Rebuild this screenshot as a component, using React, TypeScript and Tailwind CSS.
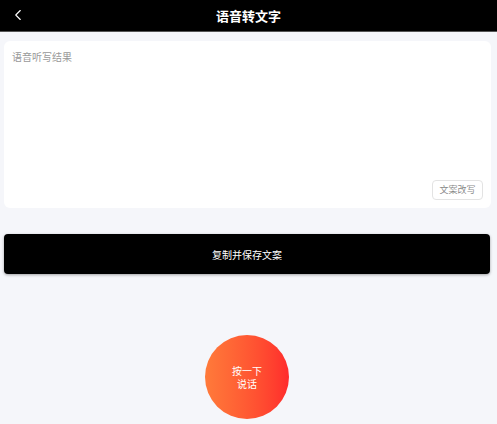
import { ChevronLeft } from 'lucide-react';

export default function App() {
  return (
    <div className="min-h-[424px] bg-[#f5f6fa] font-['Noto_Sans_CJK_SC','Noto_Sans',sans-serif]">
      <header className="relative flex h-8 items-center justify-center bg-black border-b border-[#555]">
        <button className="absolute left-[9px] top-[6px] text-white">
          <ChevronLeft className="h-[18px] w-[18px]" strokeWidth={1.5} />
        </button>
        <h1 className="text-[13px] font-bold text-white">语音转文字</h1>
      </header>

      <div className="px-1 pt-[9px]">
        <div className="mr-[2px] flex h-[167px] flex-col rounded-md bg-white px-2 pb-2 pt-[9px]">
          <p className="flex-1 text-[10px] leading-[14px] text-[#999]">语音听写结果</p>
          <div className="flex justify-end">
            <button className="h-5 w-[51px] rounded border border-[#e3e3e3] text-[9px] text-[#888]">
              文案改写
            </button>
          </div>
        </div>

        <button
          className="mt-[26px] flex h-10 items-center justify-center rounded bg-black text-[10px] text-white shadow-[0_1px_3px_rgba(0,0,0,0.35)]"
          style={{ width: 'calc(100% - 3px)' }}
        >
          复制并保存文案
        </button>

        <div className="mt-[61px] flex justify-center pr-[3px]">
          <button className="flex h-[84px] w-[84px] flex-col items-center justify-center gap-[1px] rounded-full bg-gradient-to-r from-[#ff7a3a] to-[#ff2a2c] text-[10px] leading-[12px] text-white">
            <span className="block">按一下</span>
            <span className="block">说话</span>
          </button>
        </div>
      </div>
    </div>
  );
}
